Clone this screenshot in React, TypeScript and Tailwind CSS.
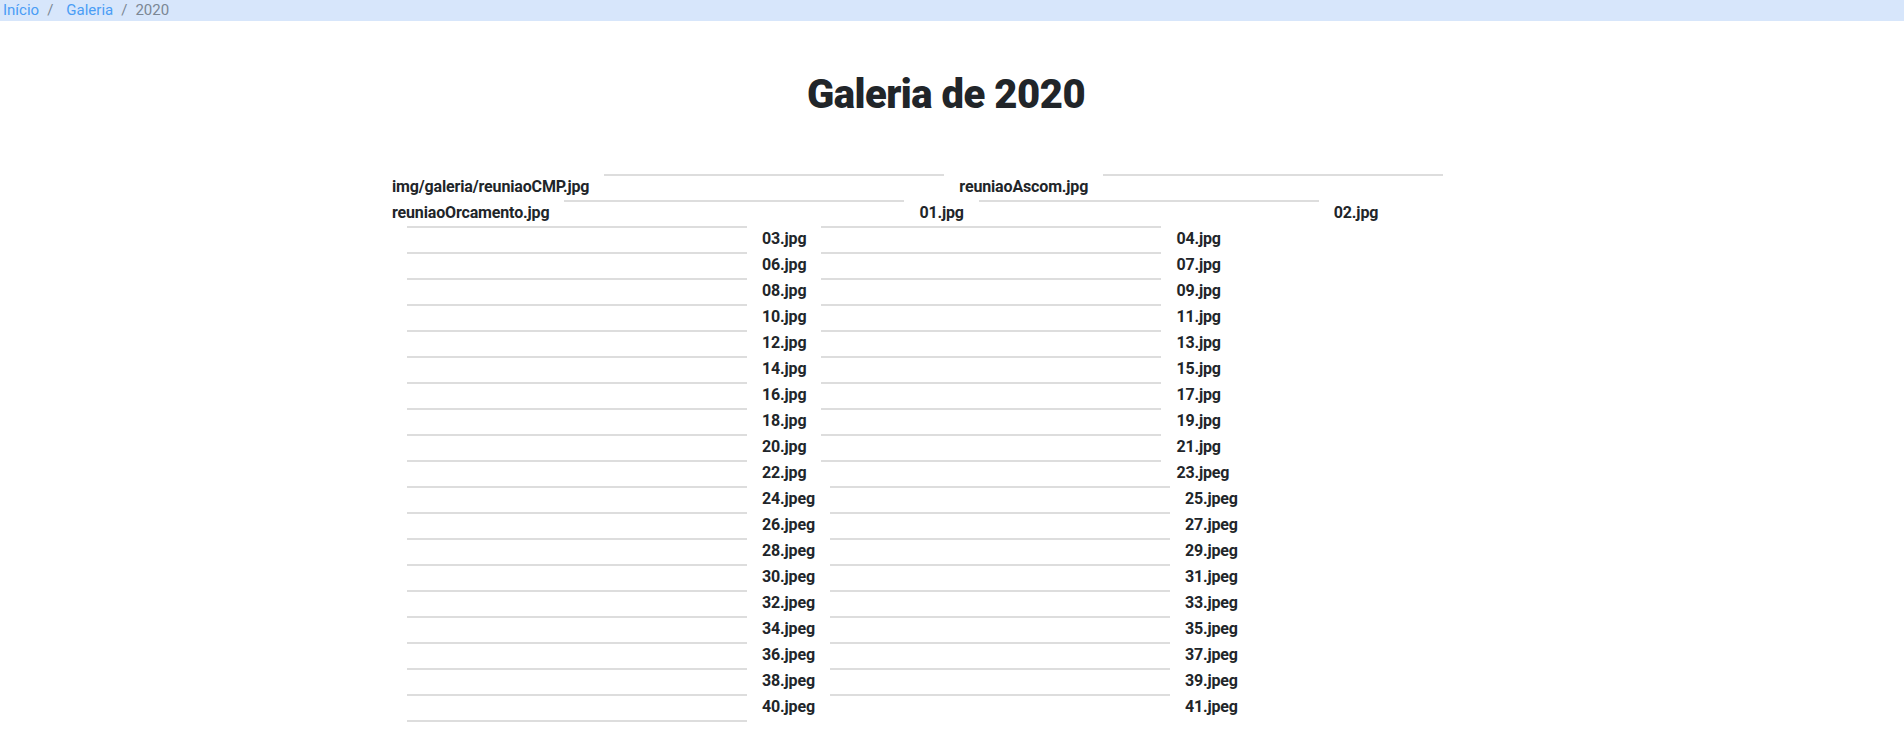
const photos = [
  'img/galeria/reuniaoCMP.jpg',
  'reuniaoAscom.jpg',
  'reuniaoOrcamento.jpg',
  '01.jpg',
  '02.jpg',
  '03.jpg',
  '04.jpg',
  '06.jpg',
  '07.jpg',
  '08.jpg',
  '09.jpg',
  '10.jpg',
  '11.jpg',
  '12.jpg',
  '13.jpg',
  '14.jpg',
  '15.jpg',
  '16.jpg',
  '17.jpg',
  '18.jpg',
  '19.jpg',
  '20.jpg',
  '21.jpg',
  '22.jpg',
  '23.jpeg',
  '24.jpeg',
  '25.jpeg',
  '26.jpeg',
  '27.jpeg',
  '28.jpeg',
  '29.jpeg',
  '30.jpeg',
  '31.jpeg',
  '32.jpeg',
  '33.jpeg',
  '34.jpeg',
  '35.jpeg',
  '36.jpeg',
  '37.jpeg',
  '38.jpeg',
  '39.jpeg',
  '40.jpeg',
  '41.jpeg',
];

export default function App() {
  return (
    <div className="min-h-screen bg-white font-['Roboto',sans-serif]">
      {/* breadcrumb */}
      <nav className="h-[21px] bg-[#d7e6fb] pl-[3px] text-[15px] leading-[21px]">
        <a href="#" className="text-[#4a9df5]">Início</a>
        <span className="px-[8px] text-[#7b8794]">/</span>
        <a href="#" className="pl-[5px] text-[#4a9df5]">Galeria</a>
        <span className="px-[8px] text-[#7b8794]">/</span>
        <span className="text-[#7b8794]">2020</span>
      </nav>

      <main className="mx-auto w-[1120px]">
        <h1 className="mt-[50px] pr-[12px] text-center text-[40px] leading-[48px] font-black tracking-[-0.5px] text-[#212529]">
          Galeria de 2020
        </h1>

        <div className="mt-[55px] text-[16px] leading-[26px] font-bold tracking-[-0.15px] text-[#212529]">
          {photos.map((name) => (
            <span key={name}>
              <span>{name}</span>
              <span className="inline-block align-top w-[340px] mx-[15px] border-t-2 border-[#dddddd]" />
            </span>
          ))}
        </div>
      </main>
    </div>
  );
}
